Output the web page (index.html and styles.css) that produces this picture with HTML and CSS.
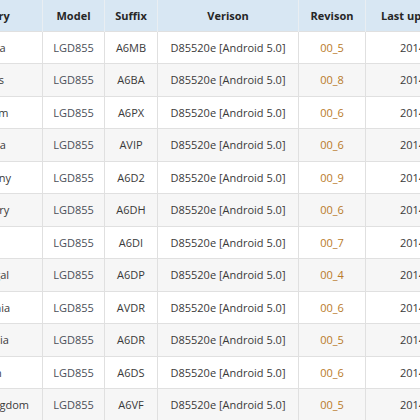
FILE: index.html
```html
<!DOCTYPE html>
<html>
<head>
<meta charset="utf-8">
<link rel="stylesheet" href="styles.css">
</head>
<body>
<table class="fw-table">
  <colgroup>
    <col class="c-country"><col class="c-model"><col class="c-suffix"><col class="c-version"><col class="c-rev"><col class="c-date">
  </colgroup>
  <thead>
    <tr><th>Country</th><th>Model</th><th>Suffix</th><th>Verison</th><th>Revison</th><th class="date">Last updated</th></tr>
  </thead>
  <tbody>
    <tr><td>Austria</td><td class="model">LGD855</td><td>A6MB</td><td>D85520e [Android 5.0]</td><td class="rev">00_5</td><td class="date">2014-11-25</td></tr>
    <tr><td>Baltics</td><td class="model">LGD855</td><td>A6BA</td><td>D85520e [Android 5.0]</td><td class="rev">00_8</td><td class="date">2014-11-25</td></tr>
    <tr><td>Belgium</td><td class="model">LGD855</td><td>A6PX</td><td>D85520e [Android 5.0]</td><td class="rev">00_6</td><td class="date">2014-11-25</td></tr>
    <tr><td>Croatia</td><td class="model">LGD855</td><td>AVIP</td><td>D85520e [Android 5.0]</td><td class="rev">00_6</td><td class="date">2014-11-25</td></tr>
    <tr><td>Germany</td><td class="model">LGD855</td><td>A6D2</td><td>D85520e [Android 5.0]</td><td class="rev">00_9</td><td class="date">2014-11-25</td></tr>
    <tr><td>Hungary</td><td class="model">LGD855</td><td>A6DH</td><td>D85520e [Android 5.0]</td><td class="rev">00_6</td><td class="date">2014-11-25</td></tr>
    <tr><td>Italy</td><td class="model">LGD855</td><td>A6DI</td><td>D85520e [Android 5.0]</td><td class="rev">00_7</td><td class="date">2014-11-25</td></tr>
    <tr><td>Portugal</td><td class="model">LGD855</td><td>A6DP</td><td>D85520e [Android 5.0]</td><td class="rev">00_4</td><td class="date">2014-11-25</td></tr>
    <tr><td>Romania</td><td class="model">LGD855</td><td>AVDR</td><td>D85520e [Android 5.0]</td><td class="rev">00_6</td><td class="date">2014-11-25</td></tr>
    <tr><td>Slovenia</td><td class="model">LGD855</td><td>A6DR</td><td>D85520e [Android 5.0]</td><td class="rev">00_5</td><td class="date">2014-11-25</td></tr>
    <tr><td>Spain</td><td class="model">LGD855</td><td>A6DS</td><td>D85520e [Android 5.0]</td><td class="rev">00_6</td><td class="date">2014-11-25</td></tr>
    <tr><td>United Kingdom</td><td class="model">LGD855</td><td>A6VF</td><td>D85520e [Android 5.0]</td><td class="rev">00_5</td><td class="date">2014-11-25</td></tr>
  </tbody>
</table>
</body>
</html>
```
FILE: styles.css
```css
html, body {
  margin: 0;
  padding: 0;
  background: #ffffff;
  overflow: hidden;
}
.fw-table {
  margin-left: -68px;
  border-collapse: collapse;
  table-layout: fixed;
  width: 535px;
  font-family: "Open Sans", "DejaVu Sans", sans-serif;
  font-size: 11px;
  color: #3a3a3a;
}
.c-country { width: 110px; }
.c-model { width: 62px; }
.c-suffix { width: 53px; }
.c-version { width: 141px; }
.c-rev { width: 67px; }
.c-date { width: 102px; }
.fw-table th {
  background: #d8e7f3;
  color: #262626;
  font-weight: 700;
  height: 30.5px;
  padding: 0;
  text-align: center;
  border-left: 1px solid #e9eef2;
  border-right: 1px solid #e9eef2;
  white-space: nowrap;
}
.fw-table td {
  height: 31.5px;
  padding: 0;
  text-align: center;
  border: 1px solid #e0e0e0;
  white-space: nowrap;
}
.fw-table tbody tr:nth-child(even) td {
  background: #f6f6f6;
}
.fw-table td.model { color: #4a4f58; }
.fw-table td.rev { color: #b97a28; }
.fw-table th.date {
  text-align: left;
  padding-left: 15px;
}
.fw-table td.date {
  text-align: left;
  padding-left: 34px;
}
```
